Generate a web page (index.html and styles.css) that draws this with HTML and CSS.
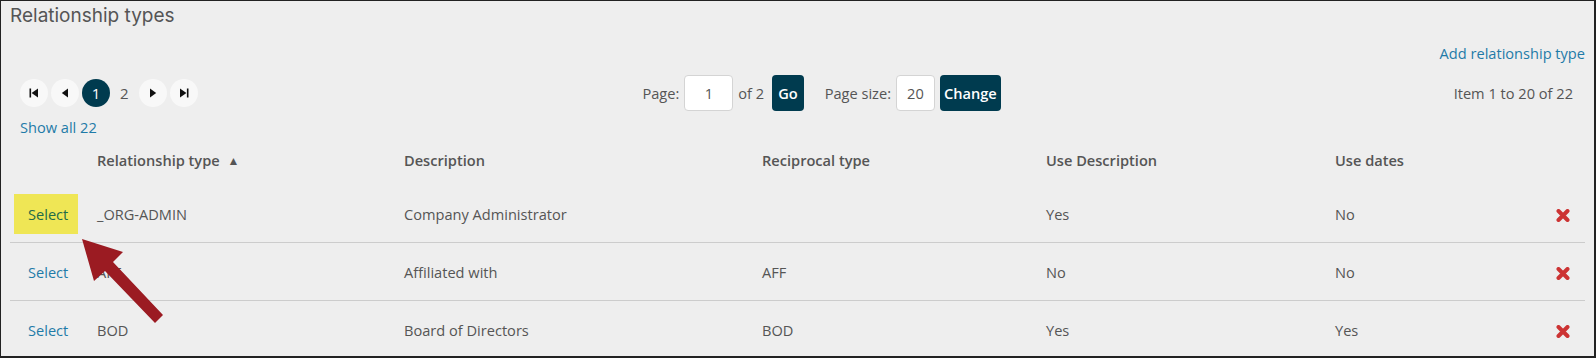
FILE: index.html
```html
<!DOCTYPE html>
<html lang="en">
<head>
    <meta charset="UTF-8">
    <meta name="viewport" content="width=device-width, initial-scale=1.0">
    <title>Relationship types</title>
    <link rel="stylesheet" href="styles.css">
</head>
<body>

<div class="frame">
    <h2 class="page-title">Relationship types</h2>

    <div class="actions">
        <a href="#" class="link">Add relationship type</a>
    </div>

    <div class="pager">
        <div class="pager-nav">
            <button class="page-btn" title="First">
                <svg width="10" height="10" viewBox="0 0 10 10"><rect x="0.5" y="0.5" width="1.6" height="9" fill="#111"/><path d="M9 0.5 L2.6 5 L9 9.5 Z" fill="#111"/></svg>
            </button>
            <button class="page-btn" title="Previous">
                <svg width="10" height="10" viewBox="0 0 10 10"><path d="M8 0.5 L1.8 5 L8 9.5 Z" fill="#111"/></svg>
            </button>
            <span class="page-num active">1</span>
            <a href="#" class="page-num">2</a>
            <button class="page-btn" title="Next">
                <svg width="10" height="10" viewBox="0 0 10 10"><path d="M2 0.5 L8.2 5 L2 9.5 Z" fill="#111"/></svg>
            </button>
            <button class="page-btn" title="Last">
                <svg width="10" height="10" viewBox="0 0 10 10"><path d="M1 0.5 L7.4 5 L1 9.5 Z" fill="#111"/><rect x="7.9" y="0.5" width="1.6" height="9" fill="#111"/></svg>
            </button>
        </div>

        <div class="pager-form">
            <label for="pageNo">Page:</label>
            <input type="text" id="pageNo" class="box page-input" value="1">
            <span class="of-total">of 2</span>
            <button class="dark-btn">Go</button>
            <label for="pageSize" class="size-label">Page size:</label>
            <input type="text" id="pageSize" class="box size-input" value="20">
            <button class="dark-btn change-btn">Change</button>
        </div>

        <div class="pager-count">Item 1 to 20 of 22</div>
    </div>

    <a href="#" class="link show-all">Show all 22</a>

    <table class="grid">
        <colgroup>
            <col style="width: 77px">
            <col style="width: 307px">
            <col style="width: 358px">
            <col style="width: 284px">
            <col style="width: 289px">
            <col style="width: 215px">
            <col>
        </colgroup>
        <thead>
            <tr>
                <th></th>
                <th>Relationship type <span class="sort">&#9650;</span></th>
                <th>Description</th>
                <th>Reciprocal type</th>
                <th>Use Description</th>
                <th>Use dates</th>
                <th></th>
            </tr>
        </thead>
        <tbody>
            <tr>
                <td><a href="#" class="select highlight">Select</a></td>
                <td>_ORG-ADMIN</td>
                <td>Company Administrator</td>
                <td></td>
                <td>Yes</td>
                <td>No</td>
                <td class="del"><svg width="14" height="13" viewBox="0 0 14 13"><path d="M2.5 2 L11.5 11 M11.5 2 L2.5 11" stroke="#cc3333" stroke-width="4" stroke-linecap="round"/></svg></td>
            </tr>
            <tr>
                <td><a href="#" class="select">Select</a></td>
                <td>AFF</td>
                <td>Affiliated with</td>
                <td>AFF</td>
                <td>No</td>
                <td>No</td>
                <td class="del"><svg width="14" height="13" viewBox="0 0 14 13"><path d="M2.5 2 L11.5 11 M11.5 2 L2.5 11" stroke="#cc3333" stroke-width="4" stroke-linecap="round"/></svg></td>
            </tr>
            <tr>
                <td><a href="#" class="select">Select</a></td>
                <td>BOD</td>
                <td>Board of Directors</td>
                <td>BOD</td>
                <td>Yes</td>
                <td>Yes</td>
                <td class="del"><svg width="14" height="13" viewBox="0 0 14 13"><path d="M2.5 2 L11.5 11 M11.5 2 L2.5 11" stroke="#cc3333" stroke-width="4" stroke-linecap="round"/></svg></td>
            </tr>
        </tbody>
    </table>

    <!-- annotation arrow pointing at the first Select -->
    <svg class="callout" width="1596" height="358" viewBox="0 0 1596 358">
        <polygon points="82,239 123,252 113,262 163,315 155,323 105,271 94,281" fill="#9b1b22"/>
    </svg>
</div>

</body>
</html>
```

FILE: styles.css
```css
body {
    margin: 0;
    padding: 0;
    font-family: "Open Sans", Arial, sans-serif;
    font-size: 14.6px;
    color: #555555;
}

.frame {
    position: relative;
    box-sizing: border-box;
    width: 1596px;
    height: 358px;
    overflow: hidden;
    background-color: #eeeeee;
    border-top: 1px solid #222222;
    border-left: 1px solid #222222;
    border-right: 2px solid #222222;
    border-bottom: 2px solid #222222;
    padding: 3px 9px 0 9px;
}

.page-title {
    margin: 0;
    font-family: Inter, "Noto Sans", sans-serif;
    font-size: 19px;
    font-weight: 400;
    line-height: 24px;
    color: #555555;
}

.link {
    color: #1f7ba8;
    text-decoration: none;
}

.actions {
    margin-top: 15px;
    text-align: right;
    line-height: 20px;
}

.pager {
    display: flex;
    align-items: center;
    justify-content: space-between;
    margin-top: 12px;
    height: 36px;
}

.pager-nav {
    display: flex;
    align-items: center;
    gap: 3px;
    padding-left: 10px;
}

.page-btn {
    width: 28px;
    height: 28px;
    border: none;
    border-radius: 50%;
    background-color: #f8f8f8;
    padding: 0;
    display: flex;
    align-items: center;
    justify-content: center;
    cursor: pointer;
}

.page-num {
    height: 28px;
    line-height: 28px;
    padding: 0 7px;
    text-align: center;
    border-radius: 50%;
    color: #555555;
    text-decoration: none;
    font-size: 15px;
}

.page-num.active {
    width: 28px;
    padding: 0;
    background-color: #003b4f;
    color: #ffffff;
}

.pager-form {
    display: flex;
    align-items: center;
    gap: 5px;
    margin-right: 8px;
}

.of-total {
    margin-right: 3px;
}

.box {
    box-sizing: border-box;
    height: 36px;
    border: 1px solid #d4d4d4;
    border-radius: 4px;
    background-color: #ffffff;
    text-align: center;
    font-family: "Open Sans", Arial, sans-serif;
    font-size: 14.6px;
    color: #555555;
    padding: 0;
}

.page-input {
    width: 49px;
}

.size-input {
    width: 39px;
}

.size-label {
    margin-left: 16px;
}

.dark-btn {
    height: 36px;
    padding: 0 6px;
    border: none;
    border-radius: 4px;
    background-color: #003b4f;
    color: #ffffff;
    font-family: "Open Sans", Arial, sans-serif;
    font-size: 14.6px;
    font-weight: 600;
    cursor: pointer;
}

.change-btn {
    padding: 0 4px;
}

.pager-count {
    padding-right: 12px;
}

.show-all {
    display: inline-block;
    margin-top: 6px;
    margin-left: 10px;
    line-height: 20px;
}

.grid {
    width: 100%;
    border-collapse: collapse;
    table-layout: fixed;
    margin-top: 0;
}

.grid th {
    height: 45px;
    text-align: left;
    font-weight: 600;
    padding: 0 0 3px 10px;
    color: #555555;
}

.sort {
    font-size: 12px;
    margin-left: 4px;
    vertical-align: 1px;
}

.grid td {
    height: 57px;
    padding: 0 0 0 10px;
    border-bottom: 1px solid #cccccc;
}

.grid td:first-child {
    padding-left: 4px;
}

.select {
    display: inline-block;
    line-height: 40px;
    padding: 0 10px 0 14px;
    color: #1f7ba8;
    text-decoration: none;
}

.select.highlight {
    background-color: #efe655;
    color: #236b49;
}

.grid td.del {
    padding: 0;
    text-align: center;
}

.del svg {
    vertical-align: middle;
}

.callout {
    position: absolute;
    left: -1px;
    top: -1px;
    pointer-events: none;
}
```
